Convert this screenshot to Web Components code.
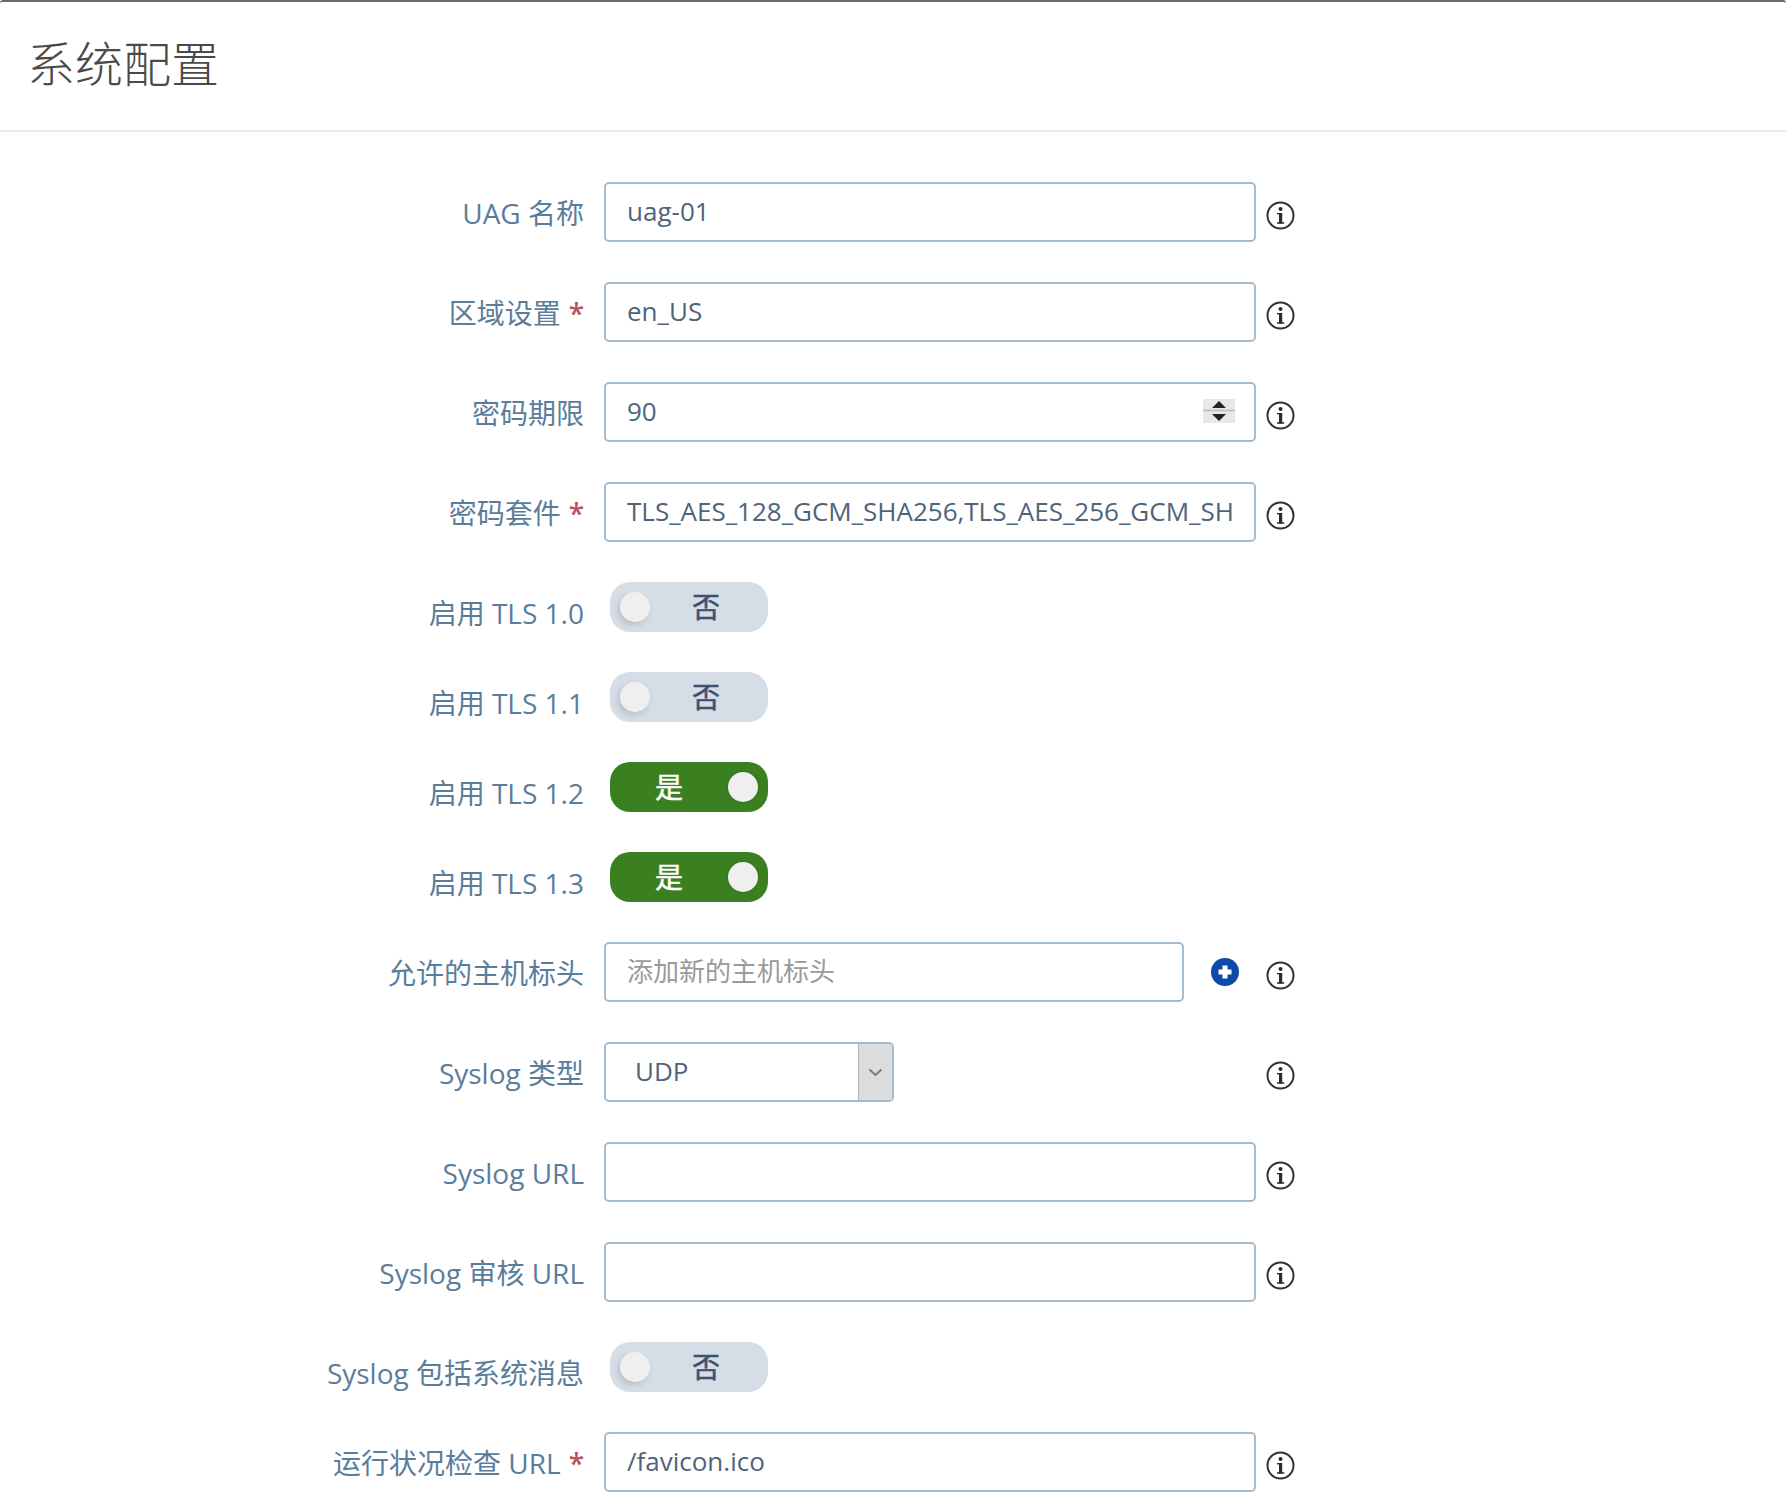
<!DOCTYPE html>
<html lang="zh-CN"><head><meta charset="utf-8"><title>系统配置</title>
<style>html,body{margin:0;padding:0;background:#fff;font-family:"Open Sans","Noto Sans CJK SC",sans-serif}</style>
</head><body>
<config-page>
<page-header>系统配置</page-header>
<form-stack>
<form-row label="UAG 名称"><text-field value="uag-01"></text-field><info-icon></info-icon></form-row>
<form-row label="区域设置" required><text-field value="en_US"></text-field><info-icon></info-icon></form-row>
<form-row label="密码期限"><text-field value="90" spinner></text-field><info-icon></info-icon></form-row>
<form-row label="密码套件" required><text-field value="TLS_AES_128_GCM_SHA256,TLS_AES_256_GCM_SH"></text-field><info-icon></info-icon></form-row>
<form-row label="启用 TLS 1.0" toggle><toggle-switch></toggle-switch></form-row>
<form-row label="启用 TLS 1.1" toggle><toggle-switch></toggle-switch></form-row>
<form-row label="启用 TLS 1.2" toggle><toggle-switch on></toggle-switch></form-row>
<form-row label="启用 TLS 1.3" toggle><toggle-switch on></toggle-switch></form-row>
<form-row label="允许的主机标头"><text-field placeholder="添加新的主机标头" short></text-field><add-icon></add-icon><info-icon></info-icon></form-row>
<form-row label="Syslog 类型"><select-field value="UDP"></select-field><info-icon></info-icon></form-row>
<form-row label="Syslog URL"><text-field></text-field><info-icon></info-icon></form-row>
<form-row label="Syslog 审核 URL"><text-field></text-field><info-icon></info-icon></form-row>
<form-row label="Syslog 包括系统消息" toggle><toggle-switch></toggle-switch></form-row>
<form-row label="运行状况检查 URL" required><text-field value="/favicon.ico"></text-field><info-icon></info-icon></form-row>
</form-stack>
</config-page>
<script>
function el(name,css,html){
  customElements.define(name,class extends HTMLElement{
    connectedCallback(){
      if(this.shadowRoot)return;
      const r=this.attachShadow({mode:'open'});
      r.innerHTML='<style>'+css+'</style>'+(typeof html==='function'?html(this):html);
    }
  });
}
el('config-page',':host{display:block;width:1786px;height:1512px;overflow:hidden;box-sizing:border-box;border-top:2px solid #6b6b6b;border-radius:3px 3px 0 0}','<slot></slot>');
el('page-header',':host{display:block;box-sizing:border-box;height:130px;padding:32px 0 0 27px;border-bottom:2px solid #e9ebed;font-size:48px;line-height:60px;color:#4a4a4a;font-weight:300}','<slot></slot>');
el('form-stack',':host{display:flex;flex-direction:column;gap:40px;padding-top:50px}','<slot></slot>');
el('form-row',':host{display:flex;align-items:flex-start;height:60px}:host([toggle]){height:50px}.l{flex:none;width:584px;box-sizing:border-box;text-align:right;font-size:28px;line-height:38px;color:#5b7d9c;white-space:nowrap;padding-top:12px}.s{color:#b5525c;font-weight:600;margin-left:8px}.c{display:flex;align-items:flex-start;margin-left:20px}',
 h=>`<div class="l">${h.getAttribute('label')}${h.hasAttribute('required')?'<span class="s">*</span>':''}</div><div class="c"><slot></slot></div>`);
el('text-field',`:host{display:block;position:relative;box-sizing:border-box;width:652px;height:60px;border:2px solid #a6bbcd;border-radius:5px;background:#fff;overflow:hidden}
:host([short]){width:580px}
.v{padding:0 0 0 21px;font-size:26px;line-height:55px;color:#4f6478;white-space:nowrap;overflow:hidden}
.p{color:#9a9a9a;font-size:26px}
.sp{position:absolute;right:19px;top:15px;width:32px;height:24px;background:#e8e8e8}`,
 h=>{const p=h.getAttribute('placeholder');return `<div class="v ${p?'p':''}">${p||h.getAttribute('value')||''}</div>`+(h.hasAttribute('spinner')?'<svg class="sp" viewBox="0 0 32 24"><rect y="10.5" width="32" height="2" fill="#c4c4c4"/><path d="M16 2l7 7H9zM16 22l-7-7h14z" fill="#222"/></svg>':'')});
el('select-field',`:host{display:flex;box-sizing:border-box;width:290px;height:60px;border:2px solid #a6bbcd;border-radius:5px;background:#fff;overflow:hidden;margin-right:362px}
.v{flex:1;padding-left:29px;font-size:26px;line-height:55px;color:#4f6478}
.b{flex:none;width:33px;background:#dcdcdc;border-left:1px solid #a9b5bf;display:flex;align-items:center;justify-content:center}`,
 h=>`<div class="v">${h.getAttribute('value')}</div><div class="b"><svg width="15" height="9" viewBox="0 0 15 9"><path d="M1.5 1.5l6 5.5 6-5.5" fill="none" stroke="#777" stroke-width="1.8"/></svg></div>`);
el('toggle-switch',`:host{display:block;position:relative;box-sizing:border-box;width:158px;height:50px;margin-left:6px;border-radius:20px;background:#d5dde6;color:#3f5070;font-size:28px;font-weight:400;-webkit-text-stroke:.5px currentColor}
:host([on]){background:#3a8020;color:#fff}
.k{position:absolute;top:10px;left:10px;width:30px;height:30px;border-radius:50%;background:#efefef;box-shadow:-2px 3px 6px rgba(0,0,0,.14)}
:host([on]) .k{left:118px;box-shadow:0 0 3px rgba(0,0,0,.2)}
.t{position:absolute;left:82px;width:28px;line-height:50px;text-align:center}
:host([on]) .t{left:45px}`,
 h=>`<div class="k"></div><div class="t">${h.hasAttribute('on')?'是':'否'}</div>`);
el('info-icon',':host{display:block;flex:none;width:29px;height:29px;margin:19px 0 0 10px}svg{display:block}',
 '<svg width="29" height="29" viewBox="0 0 29 29"><circle cx="14.5" cy="14.5" r="13" fill="#fff" stroke="#333" stroke-width="2"/><rect x="13" y="12" width="3.2" height="10.5" fill="#2b2b2b"/><rect x="11" y="21.2" width="7.2" height="1.5" fill="#2b2b2b"/><rect x="11" y="12" width="3" height="1.4" fill="#2b2b2b"/><circle cx="14.5" cy="8" r="2" fill="#2b2b2b"/></svg>');
el('add-icon',':host{display:block;flex:none;width:28px;height:28px;margin:16px 17px 0 27px}svg{display:block}',
 '<svg width="28" height="28" viewBox="0 0 28 28"><circle cx="14" cy="14" r="14" fill="#0d4aa6"/><path d="M14 7.5v13M7.5 14h13" stroke="#fff" stroke-width="5"/></svg>');
</script>
</body></html>
